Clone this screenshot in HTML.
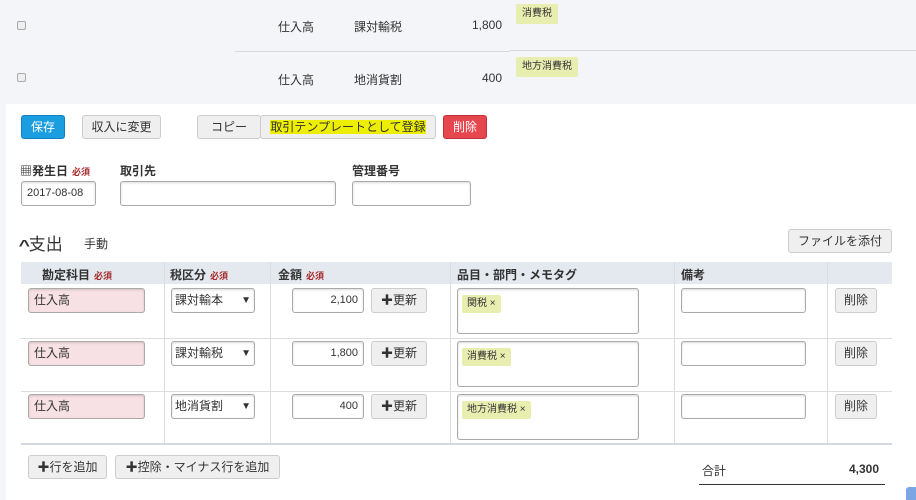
<!DOCTYPE html>
<html><head><meta charset="utf-8"><style>
*{box-sizing:border-box;margin:0;padding:0}
body{width:916px;height:500px;overflow:hidden;background:#f4f5f8;font-family:"Liberation Sans","Noto Sans CJK JP",sans-serif;font-size:12px;color:#333;position:relative}
.a{position:absolute}
.cb{width:9px;height:9px;border:1px solid #aaa;border-radius:2px;background:#eee}
.tag{background:#e8edb0;font-size:10px;padding:3px 5px;border-radius:2px;color:#333;line-height:12px}
.ttag{padding:4px 6px;line-height:12px}
.panel{left:6px;top:104px;width:910px;height:396px;background:#fff}
.btn{position:absolute;height:24px;border:1px solid #ccc;border-radius:3px;background:#efefef;text-align:center;line-height:22px;font-size:12px;color:#333}
.inp{position:absolute;border:1px solid #aaa;border-radius:3px;background:#fff;box-shadow:inset 0 1px 2px rgba(0,0,0,.15);height:25px;line-height:23px;font-size:11px;padding:0 5px}
.req{color:#a52a2a;font-size:9px;font-weight:bold;margin-left:4px}
.lbl{font-weight:bold;font-size:12px}
.hd{background:#e4e8ef;height:22px}
.vl{position:absolute;width:1px;background:#ddd}
.hl{position:absolute;height:1px;background:#ddd}
</style></head><body>
<div class="a cb" style="left:17px;top:21px"></div>
<div class="a" style="left:278px;top:18px">仕入高</div>
<div class="a" style="left:354px;top:18px">課対輸税</div>
<div class="a" style="left:460px;top:18px;width:42px;text-align:right">1,800</div>
<div class="a tag ttag" style="left:516px;top:4px">消費税</div>
<div class="a" style="left:235px;top:51px;width:275px;height:1px;background:#d8d8d8"></div>
<div class="a" style="left:510px;top:50px;width:406px;height:1px;background:#d8d8d8"></div>
<div class="a cb" style="left:17px;top:73px"></div>
<div class="a" style="left:278px;top:71px">仕入高</div>
<div class="a" style="left:354px;top:71px">地消貨割</div>
<div class="a" style="left:460px;top:71px;width:42px;text-align:right">400</div>
<div class="a tag ttag" style="left:516px;top:57px">地方消費税</div>

<div class="a panel"></div>
<div class="btn" style="left:21px;top:115px;width:44px;background:#1a9ee0;border-color:#1580c0;color:#fff">保存</div>
<div class="btn" style="left:82px;top:115px;width:79px">収入に変更</div>
<div class="btn" style="left:197px;top:115px;width:64px">コピー</div>
<div class="btn" style="left:260px;top:115px;width:176px"><span style="background:#eeee00">取引テンプレートとして登録</span></div>
<div class="btn" style="left:443px;top:115px;width:44px;background:#e6474f;border-color:#c03038;color:#fff">削除</div>

<div class="a lbl" style="left:20px;top:162px">▦発生日<span class="req">必須</span></div>
<div class="a lbl" style="left:120px;top:162px">取引先</div>
<div class="a lbl" style="left:352px;top:162px">管理番号</div>
<div class="inp" style="left:21px;top:181px;width:75px">2017-08-08</div>
<div class="inp" style="left:120px;top:181px;width:216px"></div>
<div class="inp" style="left:352px;top:181px;width:119px"></div>

<div class="a" style="left:20px;top:230px;font-size:17px"><b style="display:inline-block;transform:scaleX(1.3);font-size:15px">^</b>支出</div>
<div class="a" style="left:84px;top:235px;font-size:12px">手動</div>
<div class="btn" style="left:788px;top:229px;width:104px">ファイルを添付</div>

<div class="a hd" style="left:21px;top:262px;width:871px"></div>
<div class="a lbl" style="left:42px;top:266px">勘定科目<span class="req">必須</span></div>
<div class="a lbl" style="left:170px;top:266px">税区分<span class="req">必須</span></div>
<div class="a lbl" style="left:278px;top:266px">金額<span class="req">必須</span></div>
<div class="a lbl" style="left:457px;top:266px">品目・部門・メモタグ</div>
<div class="a lbl" style="left:681px;top:266px">備考</div>
<div class="vl" style="left:164px;top:262px;height:181px"></div>
<div class="vl" style="left:270px;top:262px;height:181px"></div>
<div class="vl" style="left:450px;top:262px;height:181px"></div>
<div class="vl" style="left:674px;top:262px;height:181px"></div>
<div class="vl" style="left:827px;top:262px;height:181px"></div>
<div class="hl" style="left:21px;top:338px;width:871px"></div>
<div class="hl" style="left:21px;top:391px;width:871px"></div>
<div class="hl" style="left:21px;top:443px;width:871px;height:2px;background:#d5d8de"></div>

<div class="inp" style="left:28px;top:288px;width:117px;background:#f7e1e4;font-size:12px">仕入高</div>
<div class="inp" style="left:171px;top:288px;width:84px;font-size:12px;padding:0 3px">課対輸本<span style="float:right;font-size:10px">▼</span></div>
<div class="inp" style="left:292px;top:288px;width:72px;text-align:right">2,100</div>
<div class="btn" style="left:371px;top:288px;width:56px;height:25px"><b>✚</b>更新</div>
<div class="inp" style="left:457px;top:288px;width:182px;height:46px;padding:3px 4px"><span class="tag" style="display:inline-block">関税 ×</span></div>
<div class="inp" style="left:681px;top:288px;width:125px"></div>
<div class="btn" style="left:835px;top:288px;width:42px;height:25px">削除</div>

<div class="inp" style="left:28px;top:341px;width:117px;background:#f7e1e4;font-size:12px">仕入高</div>
<div class="inp" style="left:171px;top:341px;width:84px;font-size:12px;padding:0 3px">課対輸税<span style="float:right;font-size:10px">▼</span></div>
<div class="inp" style="left:292px;top:341px;width:72px;text-align:right">1,800</div>
<div class="btn" style="left:371px;top:341px;width:56px;height:25px"><b>✚</b>更新</div>
<div class="inp" style="left:457px;top:341px;width:182px;height:46px;padding:3px 4px"><span class="tag" style="display:inline-block">消費税 ×</span></div>
<div class="inp" style="left:681px;top:341px;width:125px"></div>
<div class="btn" style="left:835px;top:341px;width:42px;height:25px">削除</div>

<div class="inp" style="left:28px;top:394px;width:117px;background:#f7e1e4;font-size:12px">仕入高</div>
<div class="inp" style="left:171px;top:394px;width:84px;font-size:12px;padding:0 3px">地消貨割<span style="float:right;font-size:10px">▼</span></div>
<div class="inp" style="left:292px;top:394px;width:72px;text-align:right">400</div>
<div class="btn" style="left:371px;top:394px;width:56px;height:25px"><b>✚</b>更新</div>
<div class="inp" style="left:457px;top:394px;width:182px;height:46px;padding:3px 4px"><span class="tag" style="display:inline-block">地方消費税 ×</span></div>
<div class="inp" style="left:681px;top:394px;width:125px"></div>
<div class="btn" style="left:835px;top:394px;width:42px;height:25px">削除</div>

<div class="btn" style="left:28px;top:455px;width:79px"><b>✚</b>行を追加</div>
<div class="btn" style="left:115px;top:455px;width:165px"><b>✚</b>控除・マイナス行を追加</div>
<div class="a" style="left:702px;top:462px">合計</div>
<div class="a" style="left:820px;top:462px;width:59px;text-align:right;font-weight:bold">4,300</div>
<div class="a" style="left:699px;top:484px;width:186px;height:1px;background:#333"></div>
<div class="a" style="left:906px;top:487px;width:10px;height:13px;background:#7aa6e6;border-radius:3px 0 0 0"></div>
</body></html>
